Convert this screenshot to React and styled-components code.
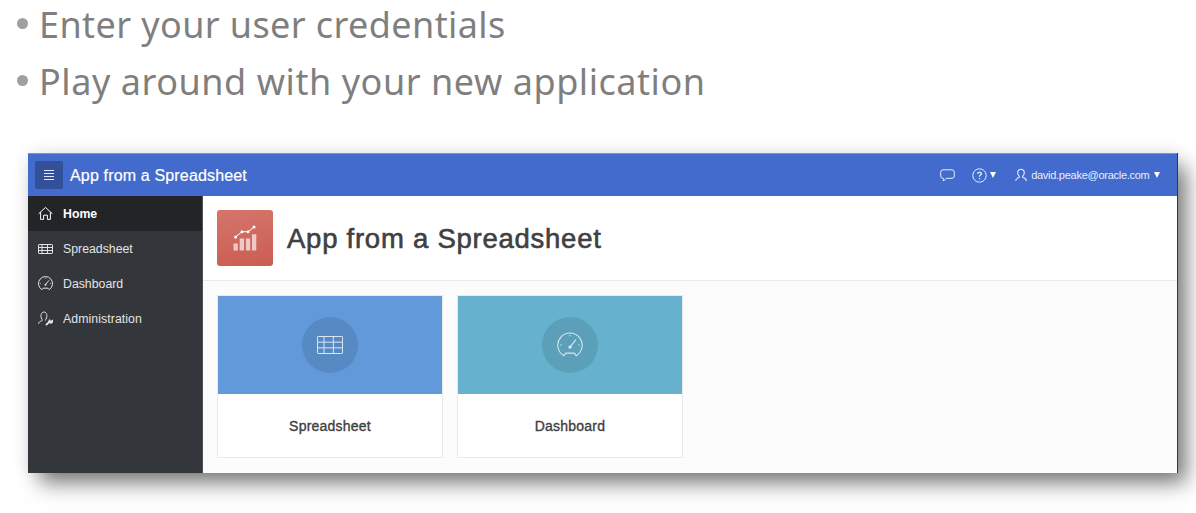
import React from "react";
import styled, { createGlobalStyle } from "styled-components";

const GlobalStyle = createGlobalStyle`
  *, *::before, *::after { box-sizing: border-box; }
  html, body { margin: 0; background: #fff; overflow: hidden; }
  body { font-family: "Liberation Sans", Arial, sans-serif; }
  svg { display: block; flex: none; }
`;

const Slide = styled.main`
  width: 1196px;
  height: 513px;
  overflow: hidden;
  display: flex;
  flex-direction: column;
  background: #fff;
`;

const Bullets = styled.ul`
  list-style: none;
  margin: 0;
  padding: 0 0 0 17px;
  height: 153px;
  flex: none;
`;

const Bullet = styled.li`
  display: flex;
  align-items: center;
  gap: 11px;
  height: 57px;
  margin-top: ${(p) => (p.$first ? "-4px" : "0")};
  font: 400 36px/57px "Noto Sans", "Open Sans", sans-serif;
  letter-spacing: ${(p) => p.$spacing};
  color: #7f7f7f;
  white-space: nowrap;

  &::before {
    content: "";
    width: 11px;
    height: 11px;
    margin-top: -2px;
    border-radius: 50%;
    background: #a0a0a0;
  }
`;

const Window = styled.section`
  width: 1150px;
  height: 320px;
  margin-left: 28px;
  flex: none;
  display: flex;
  flex-direction: column;
  border-right: 1px solid #34373d;
  box-shadow: 10px 12px 20px -2px rgba(0, 0, 0, 0.52), 0 0 16px rgba(0, 0, 0, 0.08);
`;

const TopBar = styled.header`
  height: 43px;
  flex: none;
  display: flex;
  align-items: center;
  padding: 0 17px 0 7px;
  border-top: 1px solid #8793b8;
  background: #426bcd;
  color: #fff;
`;

const MenuButton = styled.button`
  width: 28px;
  height: 28px;
  padding: 0;
  border: 0;
  border-radius: 2px;
  display: grid;
  place-items: center;
  background: #33519b;
  color: #e3e8f5;
`;

const AppName = styled.span`
  margin-left: 7px;
  font-size: 16px;
  line-height: 24px;
  letter-spacing: 0.16px;
  padding-top: 2px;
  -webkit-text-stroke: 0.2px #fff;
`;

const Actions = styled.div`
  margin-left: auto;
  display: flex;
  align-items: center;
  font-size: 11px;
  color: #e9eefa;
`;

const Action = styled.div`
  display: flex;
  align-items: center;
  gap: ${(p) => p.$gap || "4px"};
  margin-left: ${(p) => p.$offset || "0"};
  letter-spacing: ${(p) => p.$spacing || "0"};
`;

const Caret = styled.span`
  border: 3.5px solid transparent;
  border-top: 6px solid #fff;
  border-bottom: 0;
`;

const Body = styled.div`
  flex: 1;
  display: flex;
  min-height: 0;
`;

const Sidebar = styled.nav`
  width: 175px;
  flex: none;
  background: #33363b;
  border-right: 1px solid #4c4f54;
`;

const NavItem = styled.a`
  display: flex;
  align-items: center;
  gap: 10px;
  height: 35px;
  padding-left: 10px;
  font-size: 12.3px;
  letter-spacing: ${(p) => p.$spacing || "0"};
  font-weight: ${(p) => (p.$active ? 700 : 400)};
  color: ${(p) => (p.$active ? "#fff" : "#e4e4e5")};
  background: ${(p) => (p.$active ? "#232428" : "transparent")};
`;

const Content = styled.div`
  flex: 1;
  background: #fcfcfc;
`;

const Hero = styled.div`
  height: 85px;
  display: flex;
  align-items: center;
  gap: 14px;
  padding-left: 14px;
  border-bottom: 1px solid #e9e9e9;
  background: #fff;
`;

const AppIcon = styled.div`
  width: 56px;
  height: 56px;
  border-radius: 3px;
  display: grid;
  place-items: center;
  background: linear-gradient(170deg, #d4756c, #cb5d51);
`;

const Title = styled.h1`
  margin: 0;
  font-size: 27.5px;
  line-height: 34px;
  font-weight: 400;
  letter-spacing: 0.75px;
  padding-top: 2px;
  color: #404040;
  -webkit-text-stroke: 0.6px #404040;
`;

const Cards = styled.div`
  display: flex;
  gap: 14px;
  padding: 14px;
`;

const Card = styled.article`
  width: 226px;
  height: 163px;
  border: 1px solid #e9e9e9;
  background: #fff;
`;

const CardTop = styled.div`
  height: 98px;
  display: grid;
  place-items: center;
  background: ${(p) => p.$color};
`;

const Disc = styled.div`
  width: 56px;
  height: 56px;
  border-radius: 50%;
  display: grid;
  place-items: center;
  background: rgba(0, 0, 0, 0.1);
  color: #d9e6f2;
`;

const CardLabel = styled.h2`
  margin: 0;
  height: 63px;
  display: grid;
  place-items: center;
  font-size: 14px;
  font-weight: 400;
  letter-spacing: ${(p) => p.$spacing || "0.22px"};
  color: #404040;
  -webkit-text-stroke: 0.35px #404040;
`;

const Svg = ({ w, h = w, box, sw = 1, children }) => (
  <svg width={w} height={h} viewBox={box} fill="none" stroke="currentColor" strokeWidth={sw}>
    {children}
  </svg>
);

const MenuIcon = () => (
  <Svg w={10} h={10} box="0 0 10 10">
    <path d="M0 .5h10M0 3.500h10M0 6.500h10M0 9.500h10" />
  </Svg>
);

const HomeIcon = () => (
  <Svg w={15} box="0 0 15 15" sw={1}>
    <path d="M.6 7.8 7.5 1.4l6.9 6.4M2.6 6.2v7.2h3V9.2h3.8v4.2h3V6.2" />
  </Svg>
);

const TableIcon = ({ w = 15, h = 10, sw = 1 }) => (
  <Svg w={w} h={h} box={`0 0 ${w} ${h}`} sw={sw}>
    <rect x=".5" y=".5" width={w - 1} height={h - 1} rx=".6" />
    <path
      d={`M.5 ${h / 3 + 0.15}h${w - 1}M.5 ${(h * 2) / 3 - 0.15}h${w - 1}M${w * 0.27} .5v${h - 1}M${w * 0.63} .5v${h - 1}`}
    />
  </Svg>
);

const GaugeIcon = ({ w = 15, sw = 1.7 }) => (
  <Svg w={w} box="0 0 26 26" sw={sw}>
    <path d="M6.800 23.700A12.200 12.200 0 1 1 19.200 23.700L17.200 21.100H8.800Z" strokeLinejoin="round" />
    <path d="m13 14.800 6-7.200M13 2.900v1.300M3.300 13h1.400M21.300 13h1.400" />
    <circle cx="13" cy="15.100" r="1.700" fill="currentColor" stroke="none" />
  </Svg>
);

const AdminIcon = () => (
  <Svg w={15} box="0 0 15 15">
    <path d="M.6 12.800c.2-2 1.700-2.500 3-2.900 1-.3.9-1.100.3-1.800C2 5.300 3 1 5.900 1s3.900 4.300 2 7.100c-.5.6-.5 1.200.1 1.600" />
    <path d="m8.400 13.600 3.300-3.100" strokeWidth="1.900" strokeLinecap="round" />
    <path d="M12.300 7.900 11.900 9.800l1.800-.5.800-.8a2.400 2.400 0 1 1-2.200-.6Z" fill="currentColor" stroke="none" />
  </Svg>
);

const ChatIcon = () => (
  <Svg w={15} h={13} box="0 0 15 13">
    <path d="M3 .8h9a2.300 2.300 0 0 1 2.300 2.300v3.900A2.300 2.300 0 0 1 12 9.300H6.300c-.8 1.300-1.900 2.200-3.300 2.500.5-.8.6-1.600.4-2.500H3A2.300 2.300 0 0 1 .7 7V3.100A2.300 2.300 0 0 1 3 .8Z" />
  </Svg>
);

const HelpIcon = () => (
  <Svg w={15} box="0 0 15 15">
    <circle cx="7.500" cy="7.500" r="6.700" />
    <path d="M5.600 6c0-2.400 3.800-2.300 3.800-.2 0 1.300-1.900 1.300-1.900 2.900M7.500 9.900v1.300" strokeWidth="1.300" />
  </Svg>
);

const UserIcon = () => (
  <Svg w={12} h={14} box="0 0 12 14" sw={1.1}>
    <path d="M.7 13c0-2.300 1.200-2.700 2.800-3.200 1.200-.4 1.100-1.200.5-1.900C1.600 5.200 2.700 1.200 6 1.200s4.400 4 2 6.700c-.6.7-.7 1.500.5 1.900 1.600.5 2.800.9 2.800 3.200" />
  </Svg>
);

const ChartIcon = () => (
  <svg width="24" height="26" viewBox="0 0 24 26" fill="#fff">
    <path
      opacity=".65"
      d="M.5 18.500h4.300v7H.5zM6.700 13.500H11v12H6.700zM12.900 13.500h4.300v12h-4.300zM19 9.200h4.300v16.300H19z"
    />
    <path d="M2.500 12 9 6.700h6l6-4.600" fill="none" stroke="#fff" strokeWidth="1" />
    <circle cx="2.600" cy="12" r="1.500" />
    <circle cx="9" cy="6.700" r="1.500" />
    <circle cx="15" cy="6.700" r="1.500" />
    <circle cx="21" cy="2.100" r="1.500" />
  </svg>
);

export default function App() {
  return (
    <Slide>
      <GlobalStyle />
      <Bullets>
        <Bullet $first $spacing="0.4px">Enter your user credentials</Bullet>
        <Bullet $spacing="0.55px">Play around with your new application</Bullet>
      </Bullets>
      <Window>
        <TopBar>
          <MenuButton aria-label="Menu">
            <MenuIcon />
          </MenuButton>
          <AppName>App from a Spreadsheet</AppName>
          <Actions>
            <Action>
              <ChatIcon />
            </Action>
            <Action $offset="17px" $gap="3px">
              <HelpIcon />
              <Caret />
            </Action>
            <Action $offset="19px" $gap="4.5px" $spacing="-0.27px">
              <UserIcon />
              <span>david.peake@oracle.com</span>
              <Caret />
            </Action>
          </Actions>
        </TopBar>
        <Body>
          <Sidebar>
            <NavItem $active>
              <HomeIcon />
              Home
            </NavItem>
            <NavItem>
              <TableIcon />
              Spreadsheet
            </NavItem>
            <NavItem>
              <GaugeIcon />
              Dashboard
            </NavItem>
            <NavItem $spacing="0.07px">
              <AdminIcon />
              Administration
            </NavItem>
          </Sidebar>
          <Content>
            <Hero>
              <AppIcon>
                <ChartIcon />
              </AppIcon>
              <Title>App from a Spreadsheet</Title>
            </Hero>
            <Cards>
              <Card>
                <CardTop $color="#6199da">
                  <Disc>
                    <TableIcon w={26} h={18} />
                  </Disc>
                </CardTop>
                <CardLabel>Spreadsheet</CardLabel>
              </Card>
              <Card>
                <CardTop $color="#66b1cd">
                  <Disc>
                    <GaugeIcon w={26} sw={1.1} />
                  </Disc>
                </CardTop>
                <CardLabel>Dashboard</CardLabel>
              </Card>
            </Cards>
          </Content>
        </Body>
      </Window>
    </Slide>
  );
}
